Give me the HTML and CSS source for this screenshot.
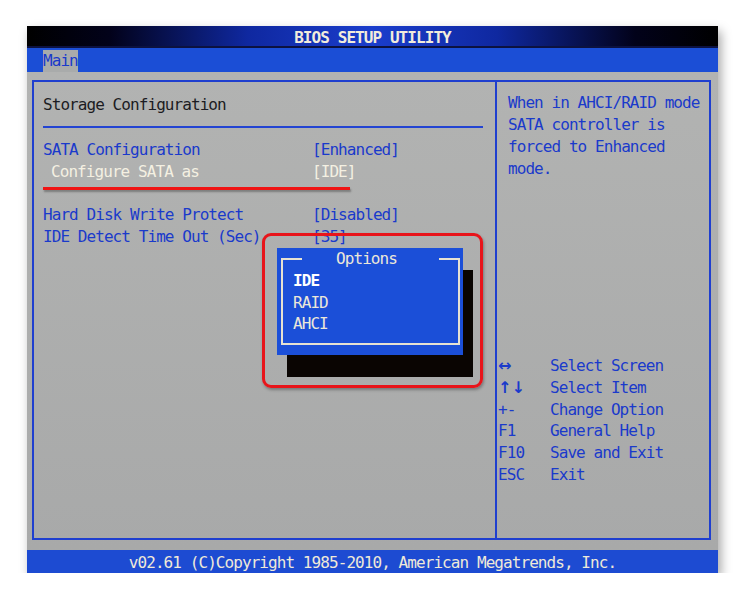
FILE: index.html
```html
<!DOCTYPE html>
<html lang="en">
  <head>
    <meta charset="UTF-8" />
    <meta name="viewport" content="width=device-width, initial-scale=1.0" />
    <title>BIOS Setup Utility</title>
    <link rel="stylesheet" href="styles.css">
  </head>
  <body>
    <div class="screen">
      <div class="titlebar">BIOS SETUP UTILITY</div>
      <div class="menubar"><span class="tab">Main</span></div>

      <div class="workspace">
        <div class="frame">
          <div class="left">
            <div class="heading">Storage Configuration</div>
            <div class="rule"></div>

            <div class="row">
              <span class="label">SATA Configuration</span>
              <span class="value">[Enhanced]</span>
            </div>
            <div class="row selected">
              <span class="label sub">Configure SATA as</span>
              <span class="value">[IDE]</span>
            </div>
            <div class="gap"><div class="mark"></div></div>
            <div class="row">
              <span class="label">Hard Disk Write Protect</span>
              <span class="value">[Disabled]</span>
            </div>
            <div class="row">
              <span class="label">IDE Detect Time Out (Sec)</span>
              <span class="value">[35]</span>
            </div>

            <!-- options popup -->
            <div class="popup">
              <div class="options">
                <div class="options-head"><span>Options</span></div>
                <div class="opt active">IDE</div>
                <div class="opt">RAID</div>
                <div class="opt">AHCI</div>
              </div>
            </div>
            <div class="callout"></div>
          </div>

          <div class="right">
            <div class="help">
              When in AHCI/RAID mode<br>
              SATA controller is<br>
              forced to Enhanced<br>
              mode.
            </div>
            <div class="keys">
              <div class="key"><span class="k arrows">&harr;</span><span>Select Screen</span></div>
              <div class="key"><span class="k arrows">&uarr;&darr;</span><span>Select Item</span></div>
              <div class="key"><span class="k">+-</span><span>Change Option</span></div>
              <div class="key"><span class="k">F1</span><span>General Help</span></div>
              <div class="key"><span class="k">F10</span><span>Save and Exit</span></div>
              <div class="key"><span class="k">ESC</span><span>Exit</span></div>
            </div>
          </div>
        </div>
      </div>

      <div class="footer">v02.61 (C)Copyright 1985-2010, American Megatrends, Inc.</div>
    </div>
  </body>
</html>
```

FILE: styles.css
```css
body {
  margin: 0;
  background: #fff;
  font-family: "DejaVu Sans Mono", "Liberation Mono", monospace;
  font-size: 16px;
  letter-spacing: -0.93px;
}

.screen {
  width: 691px;
  height: 547px;
  margin: 26px 0 0 27px;
  display: flex;
  flex-direction: column;
  box-shadow: 3px 5px 10px rgba(0, 0, 0, 0.35);
}

.titlebar {
  height: 20px;
  line-height: 23px;
  text-align: center;
  color: #f2ecdc;
  font-weight: bold;
  background: linear-gradient(
    90deg,
    #000 0%,
    #02021a 12%,
    #0f28a0 32%,
    #1a3dcc 50%,
    #0f28a0 68%,
    #02021a 88%,
    #000 100%
  );
  border-bottom: 2px solid #0c1240;
}

.menubar {
  height: 24px;
  background: #1b4ed6;
  padding-left: 16px;
}

.tab {
  display: inline-block;
  margin-top: 2px;
  height: 22px;
  line-height: 22px;
  width: 35px;
  background: #a9abab;
  color: #1a3acb;
}

.workspace {
  flex: 1;
  padding: 8px 7px 10px 5px;
  background: linear-gradient(180deg, #b2b3b2, #a8a9a9);
}

.frame {
  height: 100%;
  box-sizing: border-box;
  border: 2px solid #1f3fcf;
  display: grid;
  grid-template-columns: 463px 1fr;
}

.left {
  position: relative;
  border-right: 2px solid #1f3fcf;
  padding: 12px 12px 0 9px;
  line-height: 22px;
}

.heading {
  color: #1c1c22;
}

.rule {
  height: 2px;
  background: #2344d2;
  margin: 10px 0 11px;
}

.row {
  display: grid;
  grid-template-columns: 269px 1fr;
  color: #1a3acb;
}

.row .sub {
  padding-left: 8px;
}

.row.selected {
  color: #f4f0e2;
}

.gap {
  height: 21px;
  box-sizing: border-box;
  padding-top: 4px;
}

.mark {
  width: 307px;
  height: 3px;
  background: #f01414;
  box-shadow: 1px 2px 2px rgba(0, 0, 0, 0.3);
}

.popup {
  position: absolute;
  left: 243px;
  top: 166px;
  width: 186px;
  height: 107px;
  display: flow-root;
  background: #1b4fd8;
  box-shadow: 10px 22px 0 #0a0502;
  color: #ece8d8;
}

.options {
  display: flow-root;
  margin: 11px 3px 0 4px;
  height: 86px;
  box-sizing: border-box;
  border: 2px solid #e6e2d2;
  border-top: none;
  padding-left: 10px;
  line-height: 21.5px;
}

.options-head {
  display: flex;
  height: 22px;
  line-height: 22px;
  margin: -11px -2px 0 -12px;
}

.options-head::before,
.options-head::after {
  content: "";
  width: 21px;
  margin-top: 10px;
  border-top: 2px solid #e6e2d2;
}

.options-head span {
  flex: 1;
  text-align: center;
  padding-right: 8px;
}

.opt.active {
  color: #fff;
  font-weight: bold;
}

.callout {
  position: absolute;
  left: 228px;
  top: 151px;
  width: 221px;
  height: 155px;
  box-sizing: border-box;
  border: 3px solid #e8141a;
  border-radius: 9px;
  box-shadow: 1px 2px 3px rgba(0, 0, 0, 0.3);
}

.right {
  display: flex;
  flex-direction: column;
  color: #1a3acb;
}

.help {
  padding: 10px 0 0 11px;
  line-height: 22px;
}

.keys {
  margin-top: 175px;
  padding-left: 1px;
  line-height: 21.8px;
}

.key {
  display: flex;
}

.key .k {
  width: 52px;
}

.key .arrows {
  font-family: "DejaVu Sans", sans-serif;
  font-weight: bold;
  letter-spacing: 0;
}

.footer {
  height: 23px;
  line-height: 25px;
  text-align: center;
  background: #1d4bd2;
  color: #efe9d8;
}
```
